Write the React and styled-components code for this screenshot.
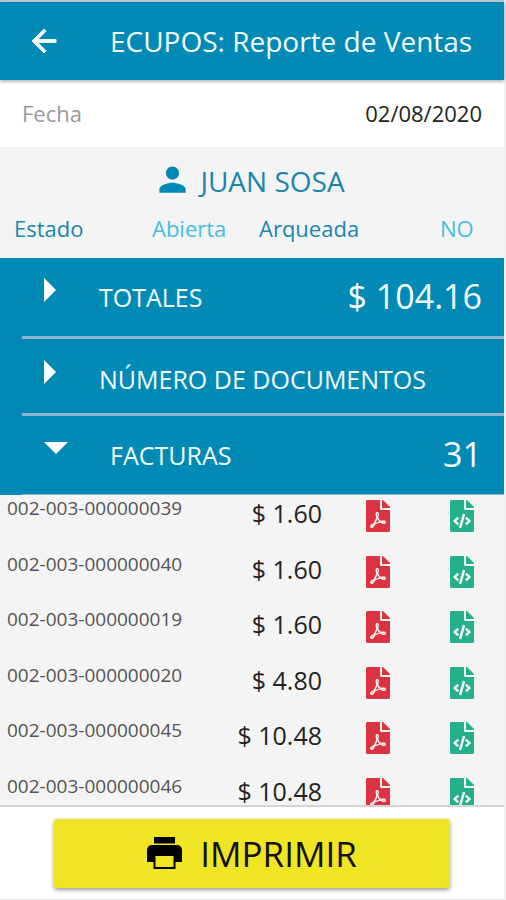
import React, { useState } from "react";
import styled, { createGlobalStyle } from "styled-components";
import { IoMdArrowBack, IoMdPerson } from "react-icons/io";
import { FaFilePdf, FaFileCode } from "react-icons/fa";

const GlobalStyle = createGlobalStyle`
  *, *::before, *::after { box-sizing: border-box; }
  body { margin: 0; background: #f0f1f2; font-family: "Open Sans", sans-serif; }
  button, input { font: inherit; color: inherit; }
`;

const Screen = styled.div`
  display: flex;
  flex-direction: column;
  height: 100vh;
  margin-right: 2px;
  border-top: 2px solid #c9d3da;
  background: #f4f4f4;
`;

const Toolbar = styled.header`
  display: flex;
  flex: none;
  align-items: center;
  gap: 48px;
  height: 78px;
  padding-left: 26px;
  background: #028ab6;
  color: #f4fcff;
  box-shadow: 0 1px 4px rgba(0, 0, 0, 0.4);
  z-index: 1;
`;

const IconButton = styled.button`
  display: flex;
  padding: 0;
  border: 0;
  background: none;
  color: ${(p) => p.$color || "inherit"};
  font-size: ${(p) => p.$size}px;
  cursor: pointer;
`;

const BackIcon = styled(IoMdArrowBack)`
  stroke: currentColor;
  stroke-width: 14;
`;

const Title = styled.h1`
  margin: 0;
  font-size: 28px;
  font-weight: 400;
  white-space: nowrap;
`;

const DateField = styled.div`
  display: flex;
  flex: none;
  align-items: center;
  justify-content: space-between;
  height: 67px;
  padding: 0 22px 2px;
  background: #fff;
  font-size: 22px;
`;

const DateLabel = styled.label`
  color: #999;
`;

const DateInput = styled.input`
  width: 160px;
  padding: 0;
  border: 0;
  background: none;
  color: #222;
  text-align: right;
`;

const Cashier = styled.section`
  display: flex;
  flex: none;
  flex-direction: column;
  height: 111px;
  padding: 14px 14px 0;
  color: #1a86ae;
`;

const CashierName = styled.h2`
  display: flex;
  align-items: center;
  justify-content: center;
  gap: 10px;
  margin: 0;
  padding-right: 4px;
  font-size: 28px;
  font-weight: 400;
  line-height: 40px;

  svg { font-size: 35px; margin-bottom: 4px; color: #028ab6; }
`;

const StatusRow = styled.div`
  display: grid;
  grid-template-columns: 138fr 107fr 181fr 36fr;
  margin-top: 12px;
  padding-right: 14px;
  font-size: 22px;
  line-height: 30px;
  white-space: nowrap;
`;

const StatusValue = styled.span`
  color: #43bfe6;
`;

const Sections = styled.section`
  display: flex;
  flex: none;
  flex-direction: column;
  padding-left: 22px;
  background: #028ab6;
`;

const SectionButton = styled.button`
  display: grid;
  grid-template-columns: ${(p) => (p.$open ? 66 : 55)}px 1fr auto;
  align-items: center;
  height: ${(p) => p.$height}px;
  padding: ${(p) => p.$top}px 22px 0 22px;
  border: 0;
  border-bottom: ${(p) => (p.$open ? 1 : 3)}px solid #8fb6d0;
  background: none;
  color: #f4fcff;
  text-align: left;
  cursor: pointer;
`;

const Triangle = styled.svg`
  display: block;
  width: ${(p) => (p.$open ? 24 : 12)}px;
  height: ${(p) => (p.$open ? 12 : 24)}px;
  margin-bottom: 14px;
  fill: #fff;
`;

const SectionName = styled.span`
  font-size: 25px;
  white-space: nowrap;
`;

const SectionValue = styled.span`
  font-size: 34px;
  line-height: 46px;
  padding-bottom: 2px;
`;

const InvoiceArea = styled.main`
  flex: 1;
  min-height: 0;
  overflow: hidden;
  border-bottom: 2px solid #d4d4d4;
`;

const InvoiceList = styled.ul`
  display: grid;
  grid-auto-rows: 1fr;
  min-height: 333px;
  margin: 0;
  padding: 0;
  list-style: none;
`;

const Invoice = styled.li`
  display: grid;
  grid-template-columns: 200fr 115fr 68fr 84fr 30fr;
  align-items: start;
  padding-left: 7px;
`;

const InvoiceNumber = styled.span`
  color: #555;
  font-size: 19px;
  line-height: 26px;
`;

const InvoiceAmount = styled.span`
  color: #222;
  font-size: 25px;
  line-height: 36px;
  text-align: right;
  white-space: nowrap;
`;

const FileButton = styled(IconButton)`
  justify-content: flex-end;
  padding-top: 5px;

  svg { width: 24px; height: 32px; }
`;

const Footer = styled.footer`
  display: flex;
  flex: none;
  justify-content: center;
  padding: 12px 54px 11px;
  border-bottom: 1px solid #e8e8e8;
  background: #fff;
`;

const PrintButton = styled.button`
  display: flex;
  flex: 1;
  align-items: center;
  justify-content: center;
  gap: 18px;
  height: 69px;
  border: 0;
  border-radius: 3px;
  background: #f0e525;
  color: #111;
  font-size: 35px;
  box-shadow: 0 2px 4px rgba(0, 0, 0, 0.4);
  cursor: pointer;
`;

const PrinterIcon = styled.svg`
  width: 35px;
  height: 32px;
  margin-bottom: 2px;
  fill: #000;
`;

const invoices = [
  ["002-003-000000039", "$ 1.60"],
  ["002-003-000000040", "$ 1.60"],
  ["002-003-000000019", "$ 1.60"],
  ["002-003-000000020", "$ 4.80"],
  ["002-003-000000045", "$ 10.48"],
  ["002-003-000000046", "$ 10.48"],
];

const initialSections = [
  { name: "TOTALES", value: "$ 104.16", open: false, height: 81, top: 0 },
  { name: "NÚMERO DE DOCUMENTOS", value: "", open: false, height: 77, top: 6 },
  { name: "FACTURAS", value: "31", open: true, height: 79, top: 0 },
];

function Section({ name, value, open, height, top, onToggle }) {
  return (
    <SectionButton
      type="button"
      aria-expanded={open}
      $open={open}
      $height={height}
      $top={top}
      onClick={onToggle}
    >
      <Triangle $open={open} viewBox={open ? "0 0 24 12" : "0 0 12 24"} aria-hidden="true">
        <path d={open ? "M0 0h24L12 12z" : "M0 0l12 12L0 24z"} />
      </Triangle>
      <SectionName>{name}</SectionName>
      <SectionValue>{value}</SectionValue>
    </SectionButton>
  );
}

export default function App() {
  const [sections, setSections] = useState(initialSections);
  const [date, setDate] = useState("02/08/2020");
  const toggle = (name) =>
    setSections((all) => all.map((s) => (s.name === name ? { ...s, open: !s.open } : s)));

  return (
    <Screen>
      <GlobalStyle />
      <Toolbar>
        <IconButton type="button" aria-label="Volver" $size={36}>
          <BackIcon />
        </IconButton>
        <Title>ECUPOS: Reporte de Ventas</Title>
      </Toolbar>
      <DateField>
        <DateLabel htmlFor="fecha">Fecha</DateLabel>
        <DateInput id="fecha" value={date} onChange={(e) => setDate(e.target.value)} />
      </DateField>
      <Cashier>
        <CashierName>
          <IoMdPerson />
          JUAN SOSA
        </CashierName>
        <StatusRow>
          <span>Estado</span>
          <StatusValue>Abierta</StatusValue>
          <span>Arqueada</span>
          <StatusValue>NO</StatusValue>
        </StatusRow>
      </Cashier>
      <Sections>
        {sections.map((s) => (
          <Section key={s.name} {...s} onToggle={() => toggle(s.name)} />
        ))}
      </Sections>
      <InvoiceArea>
        {sections[2].open && (
          <InvoiceList>
            {invoices.map(([number, amount]) => (
              <Invoice key={number}>
                <InvoiceNumber>{number}</InvoiceNumber>
                <InvoiceAmount>{amount}</InvoiceAmount>
                <FileButton type="button" aria-label={`PDF ${number}`} $color="#dc3340">
                  <FaFilePdf />
                </FileButton>
                <FileButton type="button" aria-label={`XML ${number}`} $color="#24b08c">
                  <FaFileCode />
                </FileButton>
              </Invoice>
            ))}
          </InvoiceList>
        )}
      </InvoiceArea>
      <Footer>
        <PrintButton type="button">
          <PrinterIcon viewBox="0 0 35 32" aria-hidden="true">
            <path d="M7 0h21v6.500H7z" />
            <path
              fillRule="evenodd"
              d="M5 8h25a5 5 0 0 1 5 5v12h-6.500v7h-22v-7H0V13a5 5 0 0 1 5-5zM8.500 19v11h18V19z"
            />
          </PrinterIcon>
          IMPRIMIR
        </PrintButton>
      </Footer>
    </Screen>
  );
}
